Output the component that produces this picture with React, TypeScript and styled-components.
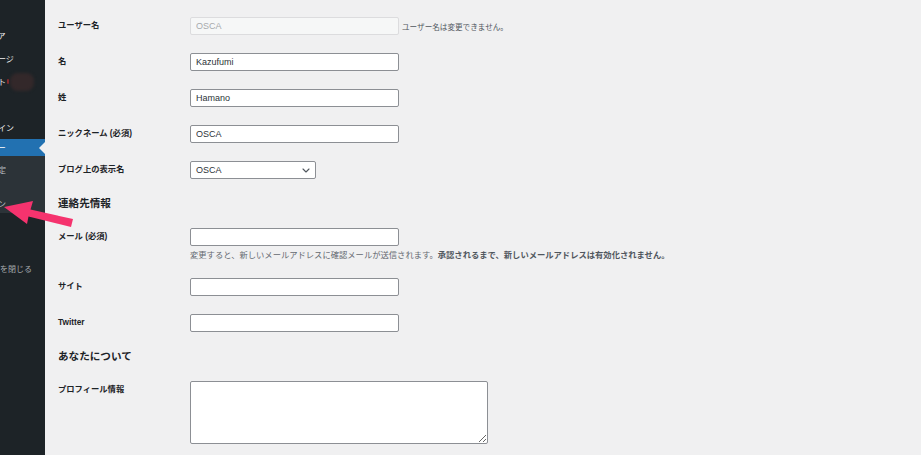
import React from "react";
import styled, { createGlobalStyle } from "styled-components";

const GlobalStyle = createGlobalStyle`
  html, body {
    margin: 0;
    padding: 0;
    background: #f0f0f1;
  }
  body {
    font-family: "Liberation Sans", "Noto Sans CJK JP", sans-serif;
    color: #1d2327;
  }
  * {
    box-sizing: border-box;
  }
`;

const Page = styled.div`
  position: relative;
  display: flex;
  width: 921px;
  height: 455px;
  overflow: hidden;
  background: #f0f0f1;
`;

/* ---------- admin menu (cropped at the left edge) ---------- */

const Sidebar = styled.nav`
  width: 45px;
  flex-shrink: 0;
  display: flex;
  justify-content: flex-end;
  overflow: hidden;
  background: #1d2327;
`;

const Menu = styled.ul`
  width: 96px;
  flex-shrink: 0;
  margin: 0;
  padding: 1px 0 0;
  list-style: none;
  font-family: "Noto Sans CJK JP", sans-serif;
  font-size: 8px;
`;

const MenuItem = styled.li<{ $current?: boolean }>`
  position: relative;
  display: flex;
  align-items: center;
  height: ${(p) => (p.$current ? "17px" : "23px")};
  padding-left: 25px;
  white-space: nowrap;
  color: ${(p) => (p.$current ? "#fff" : "#f0f0f1")};
  background: ${(p) => (p.$current ? "#2271b1" : "transparent")};

  ${(p) =>
    p.$current &&
    `
    &::after {
      content: "";
      position: absolute;
      right: 0;
      top: 50%;
      margin-top: -6px;
      border-style: solid;
      border-width: 6px 6px 6px 0;
      border-color: transparent #f0f0f1 transparent transparent;
    }
  `}
`;

const Badge = styled.span`
  display: inline-flex;
  align-items: center;
  margin-left: 1px;
  gap: 1px;

  &::before {
    content: "";
    width: 2px;
    height: 5px;
    border-radius: 1px;
    background: #8a2a2c;
  }
  &::after {
    content: "";
    width: 24px;
    height: 18px;
    border-radius: 8px;
    background: #33282a;
    filter: blur(1.5px);
  }
`;

const SubMenu = styled.ul`
  margin: 0;
  padding: 5px 0 1px;
  list-style: none;
  background: #2c3338;
`;

const SubItem = styled.li`
  display: flex;
  align-items: center;
  height: 17px;
  padding-left: 25px;
  white-space: nowrap;
  color: rgba(240, 246, 252, 0.7);
`;

const Collapse = styled.li`
  display: flex;
  align-items: center;
  height: 18px;
  padding-left: 19px;
  white-space: nowrap;
  color: #a7aaad;
`;

/* ---------- profile form ---------- */

const Content = styled.main`
  flex: 1;
  padding: 8px 0 0 13px;
`;

const FormTable = styled.table`
  border-collapse: collapse;
  border-spacing: 0;
`;

const Th = styled.th`
  width: 132px;
  padding: 12px 0 0;
  text-align: left;
  vertical-align: top;
  font-size: 8.3px;
  line-height: 11px;
  font-weight: 700;
  color: #1d2327;
`;

const Td = styled.td`
  padding: 9px 0;
  vertical-align: top;
`;

const InlineField = styled.div`
  display: flex;
  align-items: center;
`;

const TextInput = styled.input`
  display: block;
  width: 209px;
  height: 18px;
  margin: 0;
  padding: 0 5px;
  border: 1px solid #8c8f94;
  border-radius: 2px;
  background: #fff;
  font-family: "Liberation Sans", sans-serif;
  font-size: 9px;
  color: #2c3338;
  outline: none;

  &:disabled {
    background: #f6f7f7;
    border-color: #dcdcde;
    color: #a7aaad;
  }
`;

const InlineNote = styled.span`
  margin-left: 3px;
  font-family: "Noto Sans CJK JP", sans-serif;
  font-size: 7.6px;
  color: #50575e;
  white-space: nowrap;
`;

const SelectBox = styled.div`
  display: flex;
  align-items: center;
  justify-content: space-between;
  width: 126px;
  height: 18px;
  padding: 0 5px;
  border: 1px solid #8c8f94;
  border-radius: 2px;
  background: #fff;
  font-size: 9px;
  color: #2c3338;
`;

const Description = styled.p`
  margin: 3px 0 0;
  font-family: "Noto Sans CJK JP", sans-serif;
  font-size: 8.3px;
  line-height: 11px;
  color: #646970;
  white-space: nowrap;

  strong {
    color: #50575e;
    font-weight: 700;
  }
`;

const SectionTitle = styled.h2`
  margin: 8px 0 9px;
  font-family: "Noto Sans CJK JP", sans-serif;
  font-size: 10.6px;
  line-height: 14px;
  font-weight: 700;
  color: #1d2327;
`;

const TextArea = styled.textarea`
  display: block;
  width: 298px;
  height: 63px;
  margin: 0;
  border: 1px solid #8c8f94;
  border-radius: 2px;
  background: #fff;
  font-size: 9px;
  outline: none;
`;

const ArrowLayer = styled.svg`
  position: absolute;
  left: 0;
  top: 0;
  pointer-events: none;
`;

const Chevron = () => (
  <svg width="8" height="5" viewBox="0 0 8 5" fill="none">
    <path d="M1 1l3 3 3-3" stroke="#50575e" strokeWidth="1.1" strokeLinecap="round" strokeLinejoin="round" />
  </svg>
);

type Row = { label: string; field: React.ReactNode };

const FieldRows = ({ rows }: { rows: Row[] }) => (
  <FormTable>
    <tbody>
      {rows.map((r) => (
        <tr key={r.label}>
          <Th>{r.label}</Th>
          <Td>{r.field}</Td>
        </tr>
      ))}
    </tbody>
  </FormTable>
);

export default function App() {
  const nameRows: Row[] = [
    {
      label: "ユーザー名",
      field: (
        <InlineField>
          <TextInput disabled defaultValue="OSCA" />
          <InlineNote>ユーザー名は変更できません。</InlineNote>
        </InlineField>
      ),
    },
    { label: "名", field: <TextInput defaultValue="Kazufumi" /> },
    { label: "姓", field: <TextInput defaultValue="Hamano" /> },
    { label: "ニックネーム (必須)", field: <TextInput defaultValue="OSCA" /> },
    {
      label: "ブログ上の表示名",
      field: (
        <SelectBox>
          <span>OSCA</span>
          <Chevron />
        </SelectBox>
      ),
    },
  ];

  const contactRows: Row[] = [
    {
      label: "メール (必須)",
      field: (
        <>
          <TextInput type="email" />
          <Description>
            変更すると、新しいメールアドレスに確認メールが送信されます。
            <strong>承認されるまで、新しいメールアドレスは有効化されません。</strong>
          </Description>
        </>
      ),
    },
    { label: "サイト", field: <TextInput /> },
    { label: "Twitter", field: <TextInput /> },
  ];

  const aboutRows: Row[] = [{ label: "プロフィール情報", field: <TextArea /> }];

  return (
    <>
      <GlobalStyle />
      <Page>
        <Sidebar>
          <Menu>
            <MenuItem>投稿</MenuItem>
            <MenuItem>メディア</MenuItem>
            <MenuItem>固定ページ</MenuItem>
            <MenuItem>
              コメント
              <Badge />
            </MenuItem>
            <MenuItem>外観</MenuItem>
            <MenuItem>プラグイン</MenuItem>
            <MenuItem $current>ユーザー</MenuItem>
            <SubMenu>
              <SubItem>会員設定</SubItem>
              <SubItem>一覧</SubItem>
              <SubItem>ログイン</SubItem>
            </SubMenu>
            <MenuItem>ツール</MenuItem>
            <MenuItem>設定</MenuItem>
            <Collapse>メニューを閉じる</Collapse>
          </Menu>
        </Sidebar>

        <Content>
          <FieldRows rows={nameRows} />
          <SectionTitle>連絡先情報</SectionTitle>
          <FieldRows rows={contactRows} />
          <SectionTitle>あなたについて</SectionTitle>
          <FieldRows rows={aboutRows} />
        </Content>

        <ArrowLayer width="921" height="455" viewBox="0 0 921 455">
          <polygon
            points="4,207 33,201 30.5,209.5 73,219 71,227 28.5,216.5 27,224"
            fill="#f5336e"
          />
        </ArrowLayer>
      </Page>
    </>
  );
}
